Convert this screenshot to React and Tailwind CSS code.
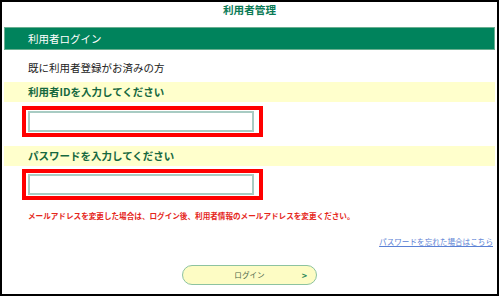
export default function App() {
  return (
    <div className="w-[499px] h-[296px] border-2 border-black bg-white font-['Noto_Sans_CJK_JP','Noto_Sans',sans-serif] overflow-hidden">
      {/* page title */}
      <div className="h-[25px] pt-[1px] flex justify-center">
        <span className="text-[10.6px] leading-[14px] font-bold text-[#0a7a55]">利用者管理</span>
      </div>

      {/* section header */}
      <div className="mx-[2px] h-[23px] bg-[#00835c] border border-[#6aaf90] flex items-center pl-[23px]">
        <span className="text-[10.5px] text-white">利用者ログイン</span>
      </div>

      <div className="h-[32px] pt-[4px] flex items-center pl-[26px]">
        <span className="text-[10.5px] text-[#222]">既に利用者登録がお済みの方</span>
      </div>

      {/* user id */}
      <div className="mx-[2px] h-[20px] bg-[#ffffcc] flex items-center pl-[24px]">
        <span className="text-[10.5px] font-bold text-[#16683f]">利用者IDを入力してください</span>
      </div>
      <div className="mt-[4px] ml-[20px] w-[241px] h-[31px] border-4 border-[#ff0000] pt-[1px] pl-[2px]">
        <input type="text" className="block w-[226px] h-[21px] border-2 border-[#a8cbc3] bg-white outline-none" />
      </div>

      {/* password */}
      <div className="mt-[9px] mx-[2px] h-[20px] bg-[#ffffcc] flex items-center pl-[24px]">
        <span className="text-[10.5px] font-bold text-[#16683f]">パスワードを入力してください</span>
      </div>
      <div className="mt-[3px] ml-[20px] w-[241px] h-[31px] border-4 border-[#ff0000] pt-[1px] pl-[2px]">
        <input type="password" className="block w-[226px] h-[21px] border-2 border-[#a8cbc3] bg-white outline-none" />
      </div>

      <div className="h-[32px] flex items-center pl-[26px]">
        <span className="text-[7.6px] font-bold text-[#e5261b]">
          メールアドレスを変更した場合は、ログイン後、利用者情報のメールアドレスを変更ください。
        </span>
      </div>

      <div className="h-[20px] flex items-center justify-end pr-[4px]">
        <a href="#" className="text-[7.6px] text-[#5a80d4] underline">パスワードを忘れた場合はこちら</a>
      </div>

      <div className="mt-[13px] ml-[180px]">
        <button className="relative w-[135px] h-[20px] rounded-full bg-[#fdfcc4] border border-[#8dc3a0] flex items-center justify-center">
          <span className="text-[7.6px] text-[#4d6648]">ログイン</span>
          <span className="absolute right-[9px] top-1/2 -translate-y-1/2 text-[9px] font-bold leading-none text-[#2f8a5a]">&gt;</span>
        </button>
      </div>
    </div>
  );
}
